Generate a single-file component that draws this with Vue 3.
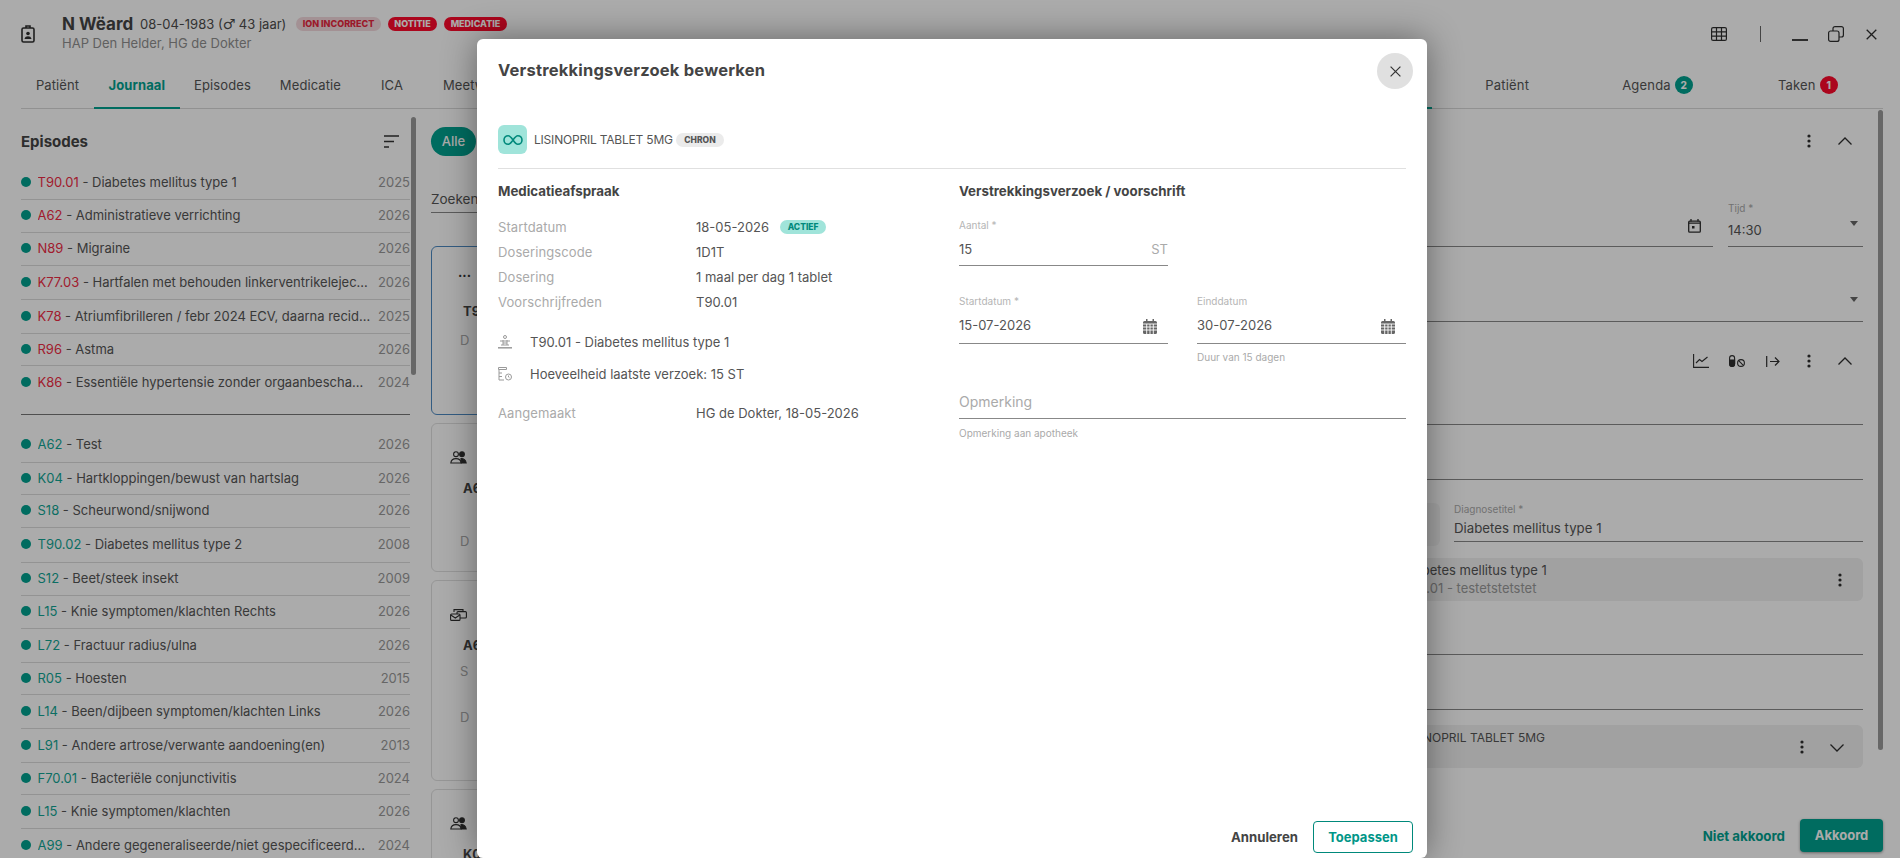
<template>
  <div class="page">
    <header class="topbar">
      <svg class="badge-icon" width="14" height="18" viewBox="0 0 14 18" fill="none" stroke="#2f2f2f" stroke-width="1.6">
        <rect x="1" y="3" width="12" height="14" rx="1.5" />
        <path d="M5 3V1h4v2" />
        <circle cx="7" cy="8.5" r="1.8" fill="#2f2f2f" stroke="none" />
        <path d="M3.5 14c.4-2 1.8-2.7 3.5-2.7s3.100.7 3.500 2.700z" fill="#2f2f2f" stroke="none" />
      </svg>
      <div class="who">
        <div class="who-line">
          <span class="who-name">N Wëard</span>
          <span class="who-date">08-04-1983 (<span class="sex">♂</span> 43 jaar)</span>
          <span class="chip chip-soft">ION INCORRECT</span>
          <span class="chip chip-red">NOTITIE</span>
          <span class="chip chip-red">MEDICATIE</span>
        </div>
        <div class="who-sub">HAP Den Helder, HG de Dokter</div>
      </div>
      <div class="win-icons">
        <svg width="16" height="14" viewBox="0 0 16 14" fill="none" stroke="#2f2f2f" stroke-width="1.2">
          <rect x=".6" y=".6" width="14.800" height="12.800" rx="1.500" />
          <path d="M.6 4.800h14.800M.6 9.100h14.800M5.500.6v12.800M10.500.6v12.800" />
        </svg>
        <span class="win-sep"></span>
        <span class="win-min"></span>
        <svg width="16" height="16" viewBox="0 0 16 16" fill="none" stroke="#2f2f2f" stroke-width="1.2">
          <rect x=".6" y="5" width="10.400" height="10.400" rx="2" />
          <path d="M5 5V2.600A2 2 0 0 1 7 .6h6.400a2 2 0 0 1 2 2V9a2 2 0 0 1-2 2H11" />
        </svg>
        <svg class="win-close" width="11" height="11" viewBox="0 0 11 11" stroke="#2f2f2f" stroke-width="1.3">
          <path d="M.7.7l9.600 9.600M10.300.7L.7 10.300" />
        </svg>
      </div>
    </header>

    <nav class="tabs">
      <div class="tabs-left">
        <span v-for="t in mainTabs" :key="t" class="tab" :class="{ active: t === 'Journaal' }">{{ t }}</span>
        <span class="tab active tab-end">Consult</span>
      </div>
      <div class="tabs-right">
        <span class="rtab">Patiënt</span>
        <span class="rtab">Agenda <b class="count teal">2</b></span>
        <span class="rtab">Taken <b class="count red">1</b></span>
      </div>
    </nav>

    <main class="content">
      <section class="episodes">
        <div class="ep-list">
          <div class="ep-head">
            <span>Episodes</span>
            <svg width="15" height="13" viewBox="0 0 15 13" stroke="#333" stroke-width="1.300">
              <path d="M0 1h15M0 6.500h10M0 12h5" />
            </svg>
          </div>
          <div
            v-for="(e, i) in activeEpisodes"
            :key="e.code"
            class="ep-row"
            :class="{ last: i === activeEpisodes.length - 1 }"
            :style="{ height: e.h + 'px' }"
          >
            <i class="dot"></i>
            <span class="ep-text"><span class="code-red">{{ e.code }}</span> - {{ e.title }}</span>
            <span class="ep-year">{{ e.year }}</span>
          </div>
          <div class="ep-split"></div>
          <div
            v-for="(e, i) in otherEpisodes"
            :key="e.code + e.title"
            class="ep-row"
            :class="{ last: i === otherEpisodes.length - 1 }"
            :style="{ height: e.h + 'px' }"
          >
            <i class="dot"></i>
            <span class="ep-text"><span class="code-green">{{ e.code }}</span> - {{ e.title }}</span>
            <span class="ep-year">{{ e.year }}</span>
          </div>
        </div>
        <div class="thumb thumb-left"></div>
      </section>

      <section class="journal">
        <span class="pill">Alle</span>
        <div class="search">Zoeken</div>
        <div class="band"></div>
        <article class="card card-on" style="height: 169px">
          <span class="card-more">...</span>
          <b>T90.01 - Diabetes mellitus type 1</b>
          <span class="card-d">D</span>
        </article>
        <article class="card" style="height: 149px">
          <svg class="card-ic" width="17" height="13" viewBox="0 0 17 13" fill="none" stroke="#2f2f2f" stroke-width="1.100">
            <circle cx="6" cy="3.200" r="2.400" />
            <circle cx="12" cy="3.200" r="2.400" fill="#2f2f2f" />
            <path d="M.8 12c.3-3 2.500-4.400 5.200-4.400S10.900 9 11.200 12z" />
            <path d="M11 7.500c2.800 0 4.700 1.600 5.200 4.500h-5z" fill="#2f2f2f" />
          </svg>
          <b>A62 - Test</b>
          <span class="card-d gap-d">D</span>
        </article>
        <article class="card" style="height: 201px">
          <svg class="card-ic" width="17" height="13" viewBox="0 0 17 13" fill="none" stroke="#2f2f2f" stroke-width="1.100">
            <path d="M4 4V1.600h9V4" />
            <rect x="7" y="3.600" width="9.400" height="6.400" rx="1" />
            <rect x=".6" y="6" width="9.400" height="6.400" rx="1" fill="#fff" />
            <path d="M.8 7l4.500 3 4.500-3" />
          </svg>
          <b>A62 - Administratieve verrichting</b>
          <span class="card-d gap-s">S</span>
          <span class="card-d gap-d2">D</span>
        </article>
        <article class="card" style="height: 149px">
          <svg class="card-ic" width="17" height="13" viewBox="0 0 17 13" fill="none" stroke="#2f2f2f" stroke-width="1.100">
            <circle cx="6" cy="3.200" r="2.400" />
            <circle cx="12" cy="3.200" r="2.400" fill="#2f2f2f" />
            <path d="M.8 12c.3-3 2.500-4.400 5.200-4.400S10.900 9 11.200 12z" />
            <path d="M11 7.500c2.800 0 4.700 1.600 5.200 4.500h-5z" fill="#2f2f2f" />
          </svg>
          <b>K04 - Hartkloppingen</b>
        </article>
      </section>

      <section class="side">
        <div class="side-main">
          <div class="form">
            <div class="tools">
              <span class="ic"><svg width="4" height="14" viewBox="0 0 4 14" fill="#2f2f2f"><circle cx="2" cy="2" r="1.600" /><circle cx="2" cy="7" r="1.600" /><circle cx="2" cy="12" r="1.600" /></svg></span>
              <span class="ic"><svg width="14" height="8" viewBox="0 0 14 8" fill="none" stroke="#2f2f2f" stroke-width="1.300"><path d="M.5 7.500L7 1l6.500 6.500" /></svg></span>
            </div>
            <div class="date-row">
              <div class="line-field date-field">
                <svg class="cal" width="13" height="14" viewBox="0 0 13 14" fill="none" stroke="#2f2f2f" stroke-width="1.300">
                  <rect x=".7" y="2.200" width="11.600" height="11" rx="1" />
                  <path d="M3 0v2.500M10 0v2.500M.7 4.200h11.600" />
                  <rect x="4" y="7" width="2.500" height="2.500" fill="#2f2f2f" stroke="none" />
                </svg>
              </div>
              <div class="line-field time-field">
                <span class="mini">Tijd *</span>
                <span class="time-val">14:30</span>
                <i class="caret"></i>
              </div>
            </div>
            <div class="line-field select-field"><i class="caret"></i></div>
            <div class="tools tools-2">
              <span class="ic"><svg width="16" height="14" viewBox="0 0 16 14" fill="none" stroke="#2f2f2f" stroke-width="1.100"><path d="M.6 0v13.400H16M3 9l3.500-3.500 2.500 2L14.500 3" /></svg></span>
              <span class="ic"><svg width="16" height="12" viewBox="0 0 16 12" fill="none" stroke="#2f2f2f" stroke-width="1.100">
                <rect x=".6" y=".6" width="5" height="10.800" rx="2.500" />
                <path d="M.6 5h5v4a2.500 2.500 0 0 1-5 0z" fill="#2f2f2f" />
                <circle cx="12" cy="8" r="3.400" /><path d="M9.700 5.700l4.600 4.600" />
              </svg></span>
              <span class="ic"><svg width="14" height="11" viewBox="0 0 14 11" fill="none" stroke="#2f2f2f" stroke-width="1.200"><path d="M.7 0v11M4 5.500h9M9 1.500l4 4-4 4" /></svg></span>
              <span class="ic"><svg width="4" height="14" viewBox="0 0 4 14" fill="#2f2f2f"><circle cx="2" cy="2" r="1.600" /><circle cx="2" cy="7" r="1.600" /><circle cx="2" cy="12" r="1.600" /></svg></span>
              <span class="ic"><svg width="14" height="8" viewBox="0 0 14 8" fill="none" stroke="#2f2f2f" stroke-width="1.300"><path d="M.5 7.500L7 1l6.500 6.500" /></svg></span>
            </div>
            <div class="line-field plain-46"></div>
            <div class="line-field plain-55"></div>
            <div class="diag-row">
              <div class="diag-box"></div>
              <div class="line-field diag-field">
                <span class="mini">Diagnosetitel *</span>
                <span class="diag-val">Diabetes mellitus type 1</span>
              </div>
            </div>
            <div class="grey-row">
              <div class="grey-text">
                <div>Diabetes mellitus type 1</div>
                <div class="grey-sub">T90.01 - testetstetstet</div>
              </div>
              <svg width="4" height="14" viewBox="0 0 4 14" fill="#2f2f2f"><circle cx="2" cy="2" r="1.600" /><circle cx="2" cy="7" r="1.600" /><circle cx="2" cy="12" r="1.600" /></svg>
            </div>
            <div class="line-field plain-54"></div>
            <div class="line-field plain-55"></div>
            <div class="grey-row med-row">
              <div class="grey-text med-line">LISINOPRIL TABLET 5MG</div>
              <svg class="med-dots" width="4" height="14" viewBox="0 0 4 14" fill="#2f2f2f"><circle cx="2" cy="2" r="1.600" /><circle cx="2" cy="7" r="1.600" /><circle cx="2" cy="12" r="1.600" /></svg>
              <svg class="med-chev" width="14" height="8" viewBox="0 0 14 8" fill="none" stroke="#2f2f2f" stroke-width="1.300"><path d="M.5.500L7 7l6.500-6.500" /></svg>
            </div>
          </div>
          <div class="thumb thumb-right"></div>
        </div>
        <div class="side-foot">
          <span class="not-ok">Niet akkoord</span>
          <span class="ok">Akkoord</span>
        </div>
      </section>
    </main>

    <div class="scrim"></div>

    <div class="dialog">
      <div class="dlg-head">
        <h2>Verstrekkingsverzoek bewerken</h2>
        <span class="dlg-close">
          <svg width="11" height="11" viewBox="0 0 11 11" stroke="#333" stroke-width="1.200"><path d="M.6.6l9.800 9.800M10.400.6L.6 10.400" /></svg>
        </span>
      </div>

      <div class="med">
        <span class="med-ic">
          <svg width="20" height="12" viewBox="0 0 20 12" fill="none" stroke="#00897b" stroke-width="1.600">
            <path d="M1 6c0-2.600 1.900-4.300 4.200-4.300C9 1.700 11 10.300 14.800 10.300 17.100 10.300 19 8.600 19 6s-1.900-4.300-4.200-4.300C11 1.700 9 10.300 5.200 10.300 2.900 10.300 1 8.600 1 6z" />
          </svg>
        </span>
        <span class="med-name">LISINOPRIL TABLET 5MG</span>
        <span class="chip-grey">CHRON</span>
      </div>

      <div class="dlg-body">
        <div class="col-info">
          <h3>Medicatieafspraak</h3>
          <dl class="facts">
            <div><dt>Startdatum</dt><dd>18-05-2026 <span class="chip-act">ACTIEF</span></dd></div>
            <div><dt>Doseringscode</dt><dd>1D1T</dd></div>
            <div><dt>Dosering</dt><dd>1 maal per dag 1 tablet</dd></div>
            <div><dt>Voorschrijfreden</dt><dd>T90.01</dd></div>
          </dl>
          <div class="info-rows">
            <div class="info-row">
              <svg width="14" height="14" viewBox="0 0 14 14" fill="none" stroke="#9a9a9a" stroke-width="1">
                <circle cx="7" cy="2" r="1.500" />
                <path d="M2 6h10M5 5v5M9 5v5M5 8h4M3 10h8" />
                <path d="M0 12.800h14" stroke-width="1.500" />
              </svg>
              <span>T90.01 - Diabetes mellitus type 1</span>
            </div>
            <div class="info-row">
              <svg width="14" height="14" viewBox="0 0 14 14" fill="none" stroke="#9a9a9a" stroke-width="1">
                <path d="M.5.500h8v2h-8zM1 2.500v10.500h5M1 6h3M1 9.500h3" />
                <circle cx="10.500" cy="10" r="3" /><path d="M10.500 8.500V10l1 .8" />
              </svg>
              <span>Hoeveelheid laatste verzoek: 15 ST</span>
            </div>
          </div>
          <dl class="facts made">
            <div><dt>Aangemaakt</dt><dd>HG de Dokter, 18-05-2026</dd></div>
          </dl>
        </div>

        <div class="col-form">
          <h3>Verstrekkingsverzoek / voorschrift</h3>
          <div class="field amount">
            <label>Aantal *</label>
            <div class="value"><span>15</span><span class="unit">ST</span></div>
          </div>
          <div class="date-pair">
            <div>
              <div class="field date">
                <label>Startdatum *</label>
                <div class="value">
                  <span>15-07-2026</span>
                  <svg class="cal-fill" width="14" height="15" viewBox="0 0 14 15"><path fill="#666" d="M3 0h1.500v2h5V0H11v2h1.500A1.500 1.500 0 0 1 14 3.500v10a1.500 1.500 0 0 1-1.500 1.500h-11A1.500 1.500 0 0 1 0 13.500v-10A1.500 1.500 0 0 1 1.500 2H3z" /><path stroke="#fff" stroke-width=".9" d="M0 5h14M0 8h14M0 11h14M3.700 5v10M7 5v10M10.300 5v10" /></svg>
                </div>
              </div>
            </div>
            <div>
              <div class="field date">
                <label>Einddatum</label>
                <div class="value">
                  <span>30-07-2026</span>
                  <svg class="cal-fill" width="14" height="15" viewBox="0 0 14 15"><path fill="#666" d="M3 0h1.500v2h5V0H11v2h1.500A1.500 1.500 0 0 1 14 3.500v10a1.500 1.500 0 0 1-1.500 1.500h-11A1.500 1.500 0 0 1 0 13.500v-10A1.500 1.500 0 0 1 1.500 2H3z" /><path stroke="#fff" stroke-width=".9" d="M0 5h14M0 8h14M0 11h14M3.700 5v10M7 5v10M10.300 5v10" /></svg>
                </div>
              </div>
              <div class="hint">Duur van 15 dagen</div>
            </div>
          </div>
          <div class="field note">
            <div class="value placeholder">Opmerking</div>
          </div>
          <div class="hint hint-note">Opmerking aan apotheek</div>
        </div>
      </div>

      <div class="dlg-foot">
        <span class="btn-text">Annuleren</span>
        <span class="btn-line">Toepassen</span>
      </div>
    </div>
  </div>
</template>

<script setup>
const mainTabs = ['Patiënt', 'Journaal', 'Episodes', 'Medicatie', 'ICA', 'Meetwaarden']

const activeEpisodes = [
  { code: 'T90.01', title: 'Diabetes mellitus type 1', year: 2025, h: 34 },
  { code: 'A62', title: 'Administratieve verrichting', year: 2026, h: 33 },
  { code: 'N89', title: 'Migraine', year: 2026, h: 33 },
  { code: 'K77.03', title: 'Hartfalen met behouden linkerventrikelejectiefractie', year: 2026, h: 34 },
  { code: 'K78', title: 'Atriumfibrilleren / febr 2024 ECV, daarna recidief', year: 2025, h: 34 },
  { code: 'R96', title: 'Astma', year: 2026, h: 32 },
  { code: 'K86', title: 'Essentiële hypertensie zonder orgaanbeschadiging', year: 2024, h: 33 },
]

const otherEpisodes = [
  { code: 'A62', title: 'Test', year: 2026, h: 35 },
  { code: 'K04', title: 'Hartkloppingen/bewust van hartslag', year: 2026, h: 32 },
  { code: 'S18', title: 'Scheurwond/snijwond', year: 2026, h: 33 },
  { code: 'T90.02', title: 'Diabetes mellitus type 2', year: 2008, h: 35 },
  { code: 'S12', title: 'Beet/steek insekt', year: 2009, h: 33 },
  { code: 'L15', title: 'Knie symptomen/klachten Rechts', year: 2026, h: 33 },
  { code: 'L72', title: 'Fractuur radius/ulna', year: 2026, h: 34 },
  { code: 'R05', title: 'Hoesten', year: 2015, h: 32 },
  { code: 'L14', title: 'Been/dijbeen symptomen/klachten Links', year: 2026, h: 34 },
  { code: 'L91', title: 'Andere artrose/verwante aandoening(en)', year: 2013, h: 34 },
  { code: 'F70.01', title: 'Bacteriële conjunctivitis', year: 2024, h: 32 },
  { code: 'L15', title: 'Knie symptomen/klachten', year: 2026, h: 34 },
  { code: 'A99', title: 'Andere gegeneraliseerde/niet gespecificeerde aandoening', year: 2024, h: 33 },
]
</script>

<style>
html, body {
  margin: 0;
  overflow: hidden;
  background: #fff;
}
</style>

<style scoped>
.page {
  position: relative;
  width: 1900px;
  height: 858px;
  overflow: hidden;
  background: #fff;
  font-family: Inter, "Liberation Sans", sans-serif;
  font-size: 13px;
  color: #555;
}

/* top bar */
.topbar {
  display: flex;
  align-items: center;
  height: 60px;
  padding: 3px 0 0 21px;
  box-sizing: border-box;
}
.badge-icon { margin-right: 27px; margin-top: 4px; }
.who { flex: 1; padding-top: 2px; }
.who-line { display: flex; align-items: center; height: 20px; }
.who-name { font-size: 17px; font-weight: 700; color: #444; width: 78px; }
.who-date { font-size: 13px; color: #4c4c4c; width: 156px; white-space: nowrap; }
.sex { font-family: "DejaVu Sans", sans-serif; font-size: 14px; line-height: 1; }
.who-sub { font-size: 13px; line-height: 18px; color: #8f8f8f; }
.chip {
  display: inline-flex;
  align-items: center;
  justify-content: center;
  height: 14px;
  border-radius: 7px;
  font-size: 9px;
  font-weight: 800;
  box-sizing: border-box;
}
.chip-soft { width: 85px; background: #f3d9dd; color: #e8283f; margin-right: 7px; }
.chip-red { width: 49px; background: #ff0a2c; color: #fff; margin-right: 7px; }
.chip-red:last-child { width: 63px; }
.win-icons { display: flex; align-items: center; padding: 0 23px 0 0; margin-top: 5px; }
.win-sep { width: 1px; height: 16px; background: #666; margin: 0 31px 0 33px; }
.win-min { width: 16px; height: 1.200px; background: #444; margin: 12px 20px 0 0; }
.win-close { margin-left: 22px; }

/* tabs */
.tabs {
  display: flex;
  margin: 0 17px 0 21px;
  height: 49px;
  border-bottom: 1px solid #d8d8d8;
  box-sizing: border-box;
}
.tabs-left { display: flex; width: 1411px; }
.tab {
  min-width: 73px;
  padding: 1px 14.500px 0;
  box-sizing: border-box;
  text-align: center;
  line-height: 49px;
  font-size: 13px;
  letter-spacing: .1px;
  color: #555;
}
.tab.active {
  color: #00a18f;
  font-weight: 700;
  border-bottom: 2px solid #00a18f;
  height: 49px;
}
.tab-end { margin-left: auto; width: 100px; }
.tabs-right { flex: 1; display: flex; padding-top: 1px; }
.rtab {
  flex: 1;
  display: flex;
  align-items: center;
  justify-content: center;
  gap: 4px;
  font-size: 13px;
  letter-spacing: .2px;
}
.count {
  display: inline-flex;
  align-items: center;
  justify-content: center;
  width: 18px;
  height: 18px;
  border-radius: 50%;
  color: #fff;
  font-size: 10px;
  font-weight: 800;
}
.count.teal { background: #00a18f; }
.count.red { background: #ff0a2c; }

.content { display: flex; height: 749px; }

/* episodes */
.episodes { display: flex; width: 410px; margin-left: 21px; flex: none; }
.ep-list { width: 389px; flex: none; }
.ep-head {
  display: flex;
  align-items: center;
  justify-content: space-between;
  height: 57px;
  padding: 8px 11px 0 0;
  box-sizing: border-box;
  font-size: 15px;
  font-weight: 700;
  color: #444;
}
.ep-row {
  display: flex;
  align-items: center;
  box-sizing: border-box;
  padding-bottom: 2px;
  border-bottom: 1px solid #dcdcdc;
  white-space: nowrap;
}
.ep-row.last { border-bottom: 0; }
.dot {
  width: 10px;
  height: 10px;
  border-radius: 50%;
  background: #00a18f;
  margin: 0 6.500px 0 0;
  flex: none;
}
.ep-text {
  flex: 1;
  min-width: 0;
  overflow: hidden;
  text-overflow: ellipsis;
  font-size: 13px;
  margin-right: 7px;
}
.ep-year { color: #999; font-size: 13px; }
.code-red { color: #f02c45; }
.code-green { color: #12a594; }
.ep-split { height: 1px; background: #777; margin: 15px 0 13px; }
.thumb { width: 5px; background: #9a9a9a; border-radius: 3px; flex: none; }
.thumb-left { margin: 8px 0 0 1px; height: 258px; }

/* middle journal column */
.journal { width: 600px; flex: none; display: flex; flex-direction: column; align-items: flex-start; }
.pill {
  margin-top: 18px;
  width: 45px;
  height: 29px;
  line-height: 29px;
  border-radius: 15px;
  background: #00a18f;
  color: #fff;
  text-align: center;
  font-weight: 500;
}
.search {
  width: 100%;
  height: 37px;
  line-height: 47px;
  margin-top: 20px;
  box-sizing: border-box;
  border-bottom: 1px solid #888;
  font-size: 13.500px;
}
.band { width: 100%; height: 4px; margin: 26px 0 7px; background: #ececec; }
.card {
  width: 100%;
  box-sizing: border-box;
  flex: none;
  border: 1px solid #e0e0e0;
  border-radius: 6px;
  margin-bottom: 8px;
  padding: 24px 0 0 31px;
  display: flex;
  flex-direction: column;
  align-items: flex-start;
}
.card b { margin-top: 16px; color: #444; font-size: 13px; }
.card-on { border-color: #4d8ac2; }
.card-more { margin: -7px 0 7px -5px; line-height: 16px; font-weight: 700; color: #333; }
.card-ic { margin-left: -13px; margin-top: 3px; }
.card-d { margin: 13px 0 0 -3px; color: #aaa; font-size: 13px; }
.gap-s { margin-top: 10px; }
.gap-d { margin-top: 37px; }
.gap-d2 { margin-top: 30px; }

/* right column */
.side { flex: 1; min-width: 0; display: flex; flex-direction: column; padding-right: 17px; }
.side-main { display: flex; height: 701px; }
.form { flex: 1; min-width: 0; }
.thumb-right { width: 5px; height: 640px; margin: 1px 0 0 15px; }
.tools { display: flex; justify-content: flex-end; height: 36px; margin-top: 14px; }
.tools-2 { margin-top: 21px; }
.ic { display: flex; align-items: center; justify-content: center; width: 36px; height: 36px; }
.date-row { display: flex; gap: 15px; margin-top: 41px; }
.line-field {
  position: relative;
  border-bottom: 1px solid #888;
  box-sizing: border-box;
}
.date-field { flex: 1; height: 47px; }
.cal { position: absolute; right: 12px; top: 19px; }
.time-field { width: 135px; height: 47px; display: flex; flex-direction: column; }
.mini { font-size: 10px; line-height: 16px; color: #aaa; }
.time-val { margin-top: 4px; line-height: 20px; font-size: 13px; }
.caret {
  position: absolute;
  right: 5px;
  top: 21px;
  width: 0;
  height: 0;
  border: 4px solid transparent;
  border-top: 5px solid #666;
  border-bottom: 0;
}
.select-field { height: 47px; margin-top: 28px; }
.select-field .caret { top: 22px; }
.plain-46 { height: 46px; }
.plain-55 { height: 55px; }
.plain-54 { height: 54px; }
.diag-row { display: flex; gap: 14px; margin-top: 21px; height: 45px; }
.diag-box { width: 409px; height: 43px; margin-top: 2px; background: #f5f5f5; border-radius: 6px; flex: none; }
.diag-field { flex: 1; height: 41px; display: flex; flex-direction: column; }
.diag-val { line-height: 22px; font-size: 13.250px; }
.grey-row {
  display: flex;
  align-items: center;
  margin-top: 12px;
  height: 43px;
  border-radius: 6px;
  background: #f0f0f0;
  padding: 0 21px 0 371px;
}
.grey-text { flex: 1; font-size: 13px; line-height: 17.500px; }
.grey-sub { color: #999; }
.med-row { margin-top: 15px; padding-right: 19px; align-items: flex-start; padding-top: 4px; box-sizing: border-box; }
.med-line { font-size: 12px; }
.med-row .med-dots { margin: 11px 26px 0 0; }
.med-row .med-chev { margin-top: 15px; }
.side-foot { display: flex; justify-content: flex-end; align-items: center; gap: 15px; margin-top: 9px; }
.not-ok { font-weight: 700; font-size: 13.300px; color: #00a18f; }
.ok {
  width: 83px;
  height: 33px;
  line-height: 33px;
  text-align: center;
  border-radius: 4px;
  background: #00a18f;
  color: #fff;
  font-weight: 700;
  box-shadow: 0 1px 3px rgba(0, 0, 0, .4);
}

.scrim {
  position: absolute;
  inset: 0;
  background: rgba(0, 0, 0, .33);
}

/* dialog */
.dialog {
  position: absolute;
  left: 477px;
  top: 39px;
  width: 950px;
  height: 819px;
  background: #fff;
  border-radius: 6px;
  box-shadow: 0 0 34px rgba(0, 0, 0, .42);
  display: flex;
  flex-direction: column;
  padding: 14px 14px 5px 21px;
  box-sizing: border-box;
}
.dlg-head { display: flex; justify-content: space-between; align-items: center; height: 36px; }
.dlg-head h2 { margin: -2px 0 0; font-size: 16.500px; font-weight: 700; color: #444; letter-spacing: .2px; }
.dlg-close {
  display: flex;
  align-items: center;
  justify-content: center;
  width: 36px;
  height: 36px;
  border-radius: 50%;
  background: #e0e0e0;
}
.med {
  display: flex;
  align-items: center;
  gap: 7px;
  margin: 36px 7px 0 0;
  height: 44px;
  padding-bottom: 14px;
  box-sizing: border-box;
  border-bottom: 1px solid #e0e0e0;
}
.med-ic {
  display: flex;
  align-items: center;
  justify-content: center;
  width: 29px;
  height: 29px;
  border-radius: 6px;
  background: #a0e4da;
}
.med-name { font-size: 12px; letter-spacing: -.2px; color: #555; white-space: nowrap; margin-top: -1px; }
.chip-grey {
  margin-left: -4px;
  padding: 0 8.500px;
  height: 14px;
  line-height: 14px;
  border-radius: 7px;
  background: #ebebeb;
  font-size: 8.500px;
  font-weight: 800;
  color: #555;
}
.dlg-body { flex: 1; display: grid; grid-template-columns: 461px 447px; padding-top: 12px; }
h3 { margin: 0; font-size: 13.300px; line-height: 20px; font-weight: 700; color: #444; }
.facts { margin: 13px 0 0; }
.facts > div { display: flex; height: 25px; align-items: center; }
.facts dt { width: 198px; color: #aaa; letter-spacing: .1px; }
.facts dd { margin: 0; display: flex; align-items: center; }
.chip-act {
  margin-left: 11px;
  width: 46px;
  height: 14px;
  line-height: 14px;
  border-radius: 7px;
  background: #a0e4da;
  color: #00897b;
  font-size: 8.500px;
  font-weight: 800;
  text-align: center;
}
.info-rows { margin-top: 12px; }
.info-row { display: flex; align-items: center; gap: 18px; height: 32px; }
.made { margin-top: 10px; }
.field { border-bottom: 1px solid #888; box-sizing: border-box; }
.field label { display: block; font-size: 10px; line-height: 14px; padding-bottom: 2px; color: #b5b5b5; }
.field .value { display: flex; justify-content: space-between; align-items: center; margin-top: 3px; line-height: 24px; height: 24px; }
.amount { width: 209px; height: 48px; margin-top: 17px; }
.unit { color: #aaa; }
.date-pair { display: grid; grid-template-columns: 209px 209px; gap: 29px; margin-top: 28px; }
.date { height: 50px; }
.cal-fill { margin: 2px 11px 0 0; }
.hint { font-size: 10px; line-height: 16px; margin-top: 5px; color: #aaa; }
.note { height: 29px; margin-top: 25px; }
.note .value { margin-top: 0; }
.placeholder { color: #aaa; font-size: 14px; }
.hint-note { margin-top: 6px; }
.dlg-foot { display: flex; justify-content: flex-end; align-items: center; gap: 15px; }
.btn-text { font-weight: 700; font-size: 13.200px; color: #444; }
.btn-line {
  width: 100px;
  height: 32px;
  line-height: 30px;
  text-align: center;
  box-sizing: border-box;
  border: 1px solid #00897b;
  border-radius: 4px;
  color: #009688;
  font-weight: 700;
}
</style>
